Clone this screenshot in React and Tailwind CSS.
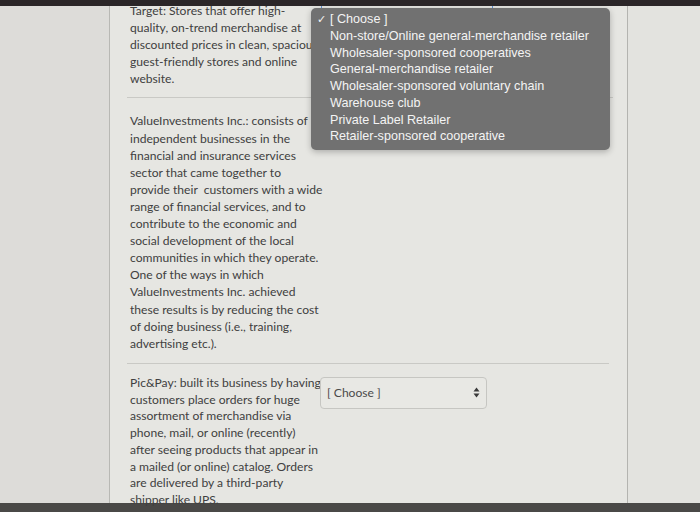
import React from "react";

const row1 = [
  "Target: Stores that offer high-",
  "quality, on-trend merchandise at",
  "discounted prices in clean, spacious,",
  "guest-friendly stores and online",
  "website.",
];
const row2 = [
  "ValueInvestments Inc.: consists of",
  "independent businesses in the",
  "financial and insurance services",
  "sector that came together to",
  "provide their  customers with a wide",
  "range of financial services, and to",
  "contribute to the economic and",
  "social development of the local",
  "communities in which they operate.",
  "One of the ways in which",
  "ValueInvestments Inc. achieved",
  "these results is by reducing the cost",
  "of doing business (i.e., training,",
  "advertising etc.).",
];
const row3 = [
  "Pic&Pay: built its business by having",
  "customers place orders for huge",
  "assortment of merchandise via",
  "phone, mail, or online (recently)",
  "after seeing products that appear in",
  "a mailed (or online) catalog. Orders",
  "are delivered by a third-party",
  "shipper like UPS.",
];
const options = [
  "Non-store/Online general-merchandise retailer",
  "Wholesaler-sponsored cooperatives",
  "General-merchandise retailer",
  "Wholesaler-sponsored voluntary chain",
  "Warehouse club",
  "Private Label Retailer",
  "Retailer-sponsored cooperative",
];

function Lines({ lines, className = "" }) {
  return (
    <div className={"w-[190px] shrink-0 " + className}>
      {lines.map((l, i) => (
        <div key={i} className="whitespace-pre">
          {l}
        </div>
      ))}
    </div>
  );
}

function Arrows() {
  return (
    <svg width="7" height="11" viewBox="0 0 7 11">
      <path d="M3.5 0.5 L6.5 4.5 L0.5 4.5 Z" fill="#3a3a3a" />
      <path d="M3.5 10.5 L6.5 6.5 L0.5 6.5 Z" fill="#3a3a3a" />
    </svg>
  );
}

export default function App() {
  return (
    <div className="w-[700px] h-[512px] overflow-hidden flex flex-col bg-[#e3e3df] relative">
      <div className="h-[6px] bg-[#2b2628] shrink-0 relative z-10" />
      <div className="flex flex-1 min-h-0">
        <div className="w-[110px] shrink-0 bg-[#dddcd9] border-r border-[#b8b8b4]" />
        <div
          className="w-[518px] shrink-0 bg-[#e6e6e2] border-r border-[#b4b4b0] pl-[20px] text-[12.1px] leading-[17.1px] text-[#404040] relative"
          style={{ fontFamily: "Lato, 'Open Sans', sans-serif" }}
        >
          <div className="flex mt-[-4px] pb-[10px]">
            <Lines lines={row1} />
            <div className="ml-[1px] mt-[-2px] w-[172px] h-[32px] rounded-[4px] border border-[#5b8fd6]" />
          </div>
          <div className="h-px bg-[#c9c9c5] ml-[-3px] mr-[14px]" />
          <div className="flex pt-[14px] pb-[11px]">
            <Lines lines={row2} />
          </div>
          <div className="h-px bg-[#c9c9c5] ml-[-3px] mr-[18px]" />
          <div className="flex pt-[11px]">
            <Lines lines={row3} className="leading-[16.75px]" />
            <div className="ml-[0px] mt-[2px] w-[167px] h-[32px] rounded-[4px] border border-[#c6c6c2] bg-[#e8e8e4] flex items-center justify-between pl-[6px] pr-[6px] text-[#4a4a4a]">
              <span>[ Choose ]</span>
              <Arrows />
            </div>
          </div>

          <div
            className="absolute left-[201px] top-[2px] w-[299px] h-[142px] rounded-[5px] bg-[#717171] shadow-[0_2px_6px_rgba(0,0,0,0.25)] pt-[3px] text-[12.6px] leading-[16.75px] text-[#f4f4f4]"
            style={{ fontFamily: "'Liberation Sans', Arial, sans-serif" }}
          >
            <div className="flex items-center">
              <span className="w-[19px] pl-[6px] text-[11px]">✓</span>
              <span>[ Choose ]</span>
            </div>
            {options.map((o) => (
              <div key={o} className="pl-[19px] whitespace-nowrap">
                {o}
              </div>
            ))}
          </div>
        </div>
        <div className="flex-1 bg-[#e3e3df]" />
      </div>
      <div className="h-[9px] bg-[#4a4947] shrink-0" />
    </div>
  );
}
